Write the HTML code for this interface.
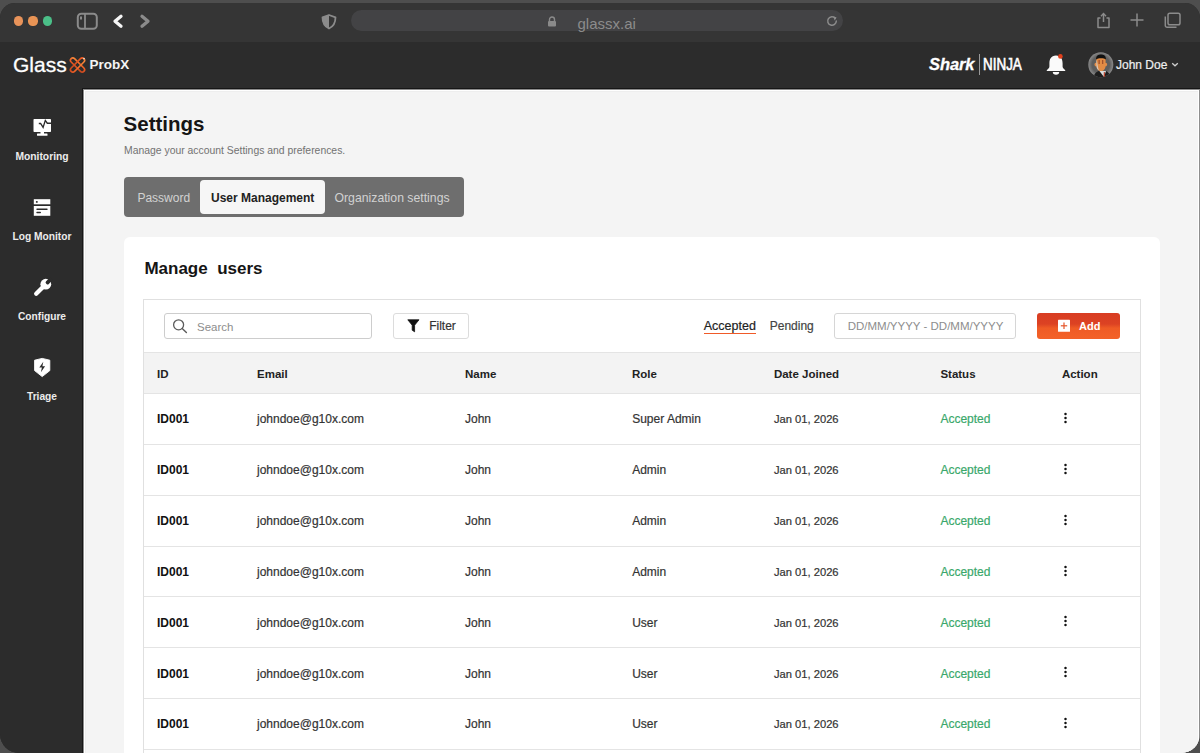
<!DOCTYPE html>
<html><head><meta charset="utf-8">
<style>
*{margin:0;padding:0;box-sizing:border-box}
html,body{width:1200px;height:753px;overflow:hidden;background:#4e4e4e;font-family:"Liberation Sans",sans-serif}
.abs{position:absolute}
svg.abs{overflow:visible}
#win{position:absolute;left:0;top:3px;width:1200px;height:750px;border-radius:15px 15px 19px 19px;overflow:hidden;background:#2c2c2c}
#pg{position:absolute;left:0;top:-3px;width:1200px;height:753px}
.t{position:absolute;white-space:nowrap;line-height:1}
</style></head>
<body>
<div id="win"><div id="pg">
<div class="abs" style="left:0px;top:0px;width:1200px;height:42px;background:#353535"></div>
<div class="abs" style="left:13.9px;top:16.4px;width:9.200000000000001px;height:9.200000000000003px;border-radius:50%;background:#e8935a"></div>
<div class="abs" style="left:28.4px;top:16.4px;width:9.200000000000003px;height:9.200000000000003px;border-radius:50%;background:#e99455"></div>
<div class="abs" style="left:43.0px;top:16.4px;width:9.200000000000003px;height:9.200000000000003px;border-radius:50%;background:#4bbf88"></div>
<svg class="abs" style="left:76px;top:12px" width="23" height="19" viewBox="0 0 23 19"><rect x="1.8" y="1.8" width="19" height="15" rx="3.5" fill="none" stroke="#8b8b8b" stroke-width="2"/><line x1="9" y1="2" x2="9" y2="17" stroke="#8b8b8b" stroke-width="1.8"/><rect x="4" y="4.5" width="2" height="3" fill="#8b8b8b"/></svg>
<svg class="abs" style="left:110px;top:12px" width="16" height="18" viewBox="0 0 16 18"><polyline points="11,4.2 5,9.2 11,14.2" fill="none" stroke="#f6f6f6" stroke-width="3.3" stroke-linecap="round" stroke-linejoin="round"/></svg>
<svg class="abs" style="left:137px;top:12px" width="16" height="18" viewBox="0 0 16 18"><polyline points="5,4.2 11,9.2 5,14.2" fill="none" stroke="#8b8b8b" stroke-width="3.3" stroke-linecap="round" stroke-linejoin="round"/></svg>
<svg class="abs" style="left:321px;top:14px" width="16" height="16" viewBox="0 0 16 16"><path d="M8 1 L14.5 3.3 C14.5 9 12.5 12.5 8 14.5 C3.5 12.5 1.5 9 1.5 3.3 Z" fill="none" stroke="#8b8b8b" stroke-width="1.8" stroke-linejoin="round"/><path d="M8 1 L1.5 3.3 C1.5 9 3.5 12.5 8 14.5 Z" fill="#8b8b8b"/></svg>
<div class="abs" style="left:351px;top:10px;width:492px;height:21px;background:#434345;border-radius:10.5px"></div>
<svg class="abs" style="left:547px;top:16px" width="10" height="11" viewBox="0 0 10 11"><path d="M2.5 5 V3.5 A2.5 2.5 0 0 1 7.5 3.5 V5" fill="none" stroke="#8a8a8a" stroke-width="1.4"/><rect x="1" y="5" width="8" height="5.5" rx="1" fill="#8a8a8a"/></svg>
<div class="t" style="left:577.50px;top:16.00px;font-size:15px;color:#8c8c8c;font-weight:normal;">glassx.ai</div>
<svg class="abs" style="left:826px;top:15px" width="12" height="12" viewBox="0 0 12 12"><path d="M9.3 3.2 A4.3 4.3 0 1 0 10.3 6" fill="none" stroke="#8c8c8c" stroke-width="1.5" stroke-linecap="round"/><path d="M7.2 1.2 L10.6 2.6 L8.6 5.4 Z" fill="#8c8c8c"/></svg>
<svg class="abs" style="left:1096px;top:12px" width="15" height="17" viewBox="0 0 15 17"><path d="M4.5 6 H2 V15.5 H13 V6 H10.5" fill="none" stroke="#8b8b8b" stroke-width="1.5" stroke-linejoin="round"/><line x1="7.5" y1="1.8" x2="7.5" y2="10" stroke="#8b8b8b" stroke-width="1.5"/><polyline points="5,4.2 7.5,1.6 10,4.2" fill="none" stroke="#8b8b8b" stroke-width="1.5"/></svg>
<svg class="abs" style="left:1129px;top:12px" width="16" height="16" viewBox="0 0 16 16"><line x1="8" y1="1.5" x2="8" y2="14.5" stroke="#8b8b8b" stroke-width="1.5"/><line x1="1.5" y1="8" x2="14.5" y2="8" stroke="#8b8b8b" stroke-width="1.5"/></svg>
<svg class="abs" style="left:1164px;top:12px" width="18" height="17" viewBox="0 0 18 17"><rect x="4" y="1.2" width="12" height="11.5" rx="1.8" fill="none" stroke="#8b8b8b" stroke-width="1.5"/><path d="M1.3 4.5 V13.5 A1.8 1.8 0 0 0 3.1 15.3 H12.5" fill="none" stroke="#8b8b8b" stroke-width="1.5"/></svg>
<div class="abs" style="left:0px;top:42px;width:1200px;height:47px;background:#2c2c2c"></div>
<div class="t" style="left:13.00px;top:54.00px;font-size:21px;color:#ffffff;font-weight:normal;letter-spacing:0px;-webkit-text-stroke:0.3px #fff">Glass</div>
<svg class="abs" style="left:68px;top:56px" width="19" height="18" viewBox="0 0 19 18"><defs><linearGradient id="og" x1="1" y1="0" x2="0" y2="1"><stop offset="0" stop-color="#f58a3c"/><stop offset="0.5" stop-color="#ee5a22"/><stop offset="1" stop-color="#c8481f"/></linearGradient></defs><rect x="7.1" y="0" width="4.8" height="18" rx="2.4" transform="rotate(-45 9.5 9)" fill="none" stroke="url(#og)" stroke-width="1.6"/><rect x="7.1" y="0" width="4.8" height="18" rx="2.4" transform="rotate(45 9.5 9)" fill="none" stroke="url(#og)" stroke-width="1.6"/><circle cx="16" cy="2.6" r="0.8" fill="#eee"/></svg>
<div class="t" style="left:89.40px;top:58.00px;font-size:13.5px;color:#f5f5f5;font-weight:bold;">ProbX</div>
<div class="t" style="left:929.00px;top:56.00px;font-size:16.5px;color:#ffffff;font-weight:bold;font-style:italic;letter-spacing:-0.1px;-webkit-text-stroke:0.3px #fff;">Shark</div>
<div class="abs" style="left:979.2px;top:54px;width:1.1999999999999318px;height:21px;background:#9a9a9a"></div>
<div class="t" style="left:982.50px;top:57.00px;font-size:16px;color:#ffffff;font-weight:normal;transform:scaleX(0.84);transform-origin:0 0;-webkit-text-stroke:0.6px #fff;letter-spacing:0px;">NINJA</div>
<svg class="abs" style="left:1045px;top:53px" width="22" height="23" viewBox="0 0 22 23"><path d="M11 2.6 C6 2.6 4.4 6.3 4.4 10.5 V13.6 C4.4 14.9 3.3 16 1.8 17.1 V18 H20.2 V17.1 C18.7 16 17.6 14.9 17.6 13.6 V10.5 C17.6 6.3 16 2.6 11 2.6 Z" fill="#fafafa"/><path d="M7.8 19 A3.2 2.8 0 0 0 14.2 19 Z" fill="#fafafa"/><circle cx="15.4" cy="3.4" r="2.3" fill="#e2401c"/></svg>
<svg class="abs" style="left:1088px;top:52px" width="26" height="26" viewBox="0 0 26 26"><defs><clipPath id="av"><circle cx="12.8" cy="12.7" r="12.5"/></clipPath><radialGradient id="avg" cx="0.5" cy="0.5" r="0.5"><stop offset="0.7" stop-color="#5e5e5e"/><stop offset="1" stop-color="#8a8a8a"/></radialGradient></defs><circle cx="12.8" cy="12.7" r="12.5" fill="url(#avg)"/><g clip-path="url(#av)"><path d="M5 27 C6 21 9 19 12.5 18.5 L18 19 C20.5 20 22 22 22.5 27 Z" fill="#1d1d1d"/><path d="M11 18.5 L16 25 L18 19 Z" fill="#dcdcdc"/><path d="M15.8 20 L16.8 20 L17.3 25.5 L15.6 25.5 Z" fill="#b8412a"/><ellipse cx="7.8" cy="12.6" rx="1.3" ry="1.8" fill="#e48e48"/><ellipse cx="17.8" cy="12.6" rx="1.3" ry="1.8" fill="#e48e48"/><path d="M8.3 7 C8.3 4.5 10.5 3.8 13 3.8 C15.5 3.8 17.6 4.6 17.6 7 V13.5 C17.6 17 15.6 19 13 19 C10.4 19 8.3 17 8.3 13.5 Z" fill="#e28c45"/><path d="M8 7.5 C8 3.5 10.5 2.6 13 2.6 C15.5 2.6 18 3.5 18 7.5 C16 5.8 10 5.8 8 7.5 Z" fill="#111"/><path d="M8.4 7.5 C9.5 10 9.5 15 11 18.5 C9 17.5 8.4 15 8.4 13 Z" fill="#d8d8d8" opacity="0.8"/><rect x="10.5" y="8" width="1.3" height="4" fill="#8a3a22" opacity="0.7"/><rect x="14" y="8" width="1.3" height="4" fill="#8a3a22" opacity="0.7"/></g></svg>
<div class="t" style="left:1116.00px;top:59.00px;font-size:12px;color:#efefef;font-weight:normal;-webkit-text-stroke:0.2px #efefef">John Doe</div>
<svg class="abs" style="left:1171px;top:62px" width="8" height="5" viewBox="0 0 8 5"><polyline points="1.2,1.2 4,3.8 6.8,1.2" fill="none" stroke="#cfcfcf" stroke-width="1.3"/></svg>
<div class="abs" style="left:0px;top:89px;width:84px;height:664px;background:#2c2c2c"></div>
<svg class="abs" style="left:33px;top:118px" width="19" height="19" viewBox="0 0 19 19"><rect x="0.5" y="1" width="17.5" height="13" rx="0.8" fill="#fff"/><rect x="7.5" y="13.5" width="3.5" height="3" fill="#fff"/><rect x="4" y="15.6" width="10.5" height="2.2" rx="0.5" fill="#fff"/><polyline points="5.8,5.5 7.6,5.5 10.1,9.4 12.3,2.4 14.3,5.2 18.5,5.2" fill="none" stroke="#2c2c2c" stroke-width="1.35" stroke-linejoin="miter"/></svg>
<div class="t" style="left:-18.00px;width:120px;text-align:center;top:152.00px;font-size:10.3px;color:#ececec;font-weight:bold;">Monitoring</div>
<svg class="abs" style="left:33px;top:198px" width="19" height="19" viewBox="0 0 19 19"><rect x="0.8" y="1.2" width="16.5" height="5.1" fill="#fff"/><rect x="0.8" y="8" width="16.5" height="9.8" fill="#fff"/><rect x="2.9" y="3" width="1.8" height="1.8" rx="0.6" fill="#2c2c2c"/><rect x="3.3" y="10.5" width="11.4" height="1.5" rx="0.7" fill="#2c2c2c"/><rect x="3.3" y="13.7" width="4.7" height="1.5" rx="0.7" fill="#2c2c2c"/></svg>
<div class="t" style="left:-18.00px;width:120px;text-align:center;top:232.00px;font-size:10.2px;color:#ececec;font-weight:bold;">Log Monitor</div>
<svg class="abs" style="left:32px;top:277px" width="21" height="21" viewBox="0 0 21 21"><line x1="4.2" y1="16.8" x2="11.5" y2="9.5" stroke="#fff" stroke-width="4.3" stroke-linecap="round"/><circle cx="13.8" cy="7.2" r="5.4" fill="#fff"/><rect x="15.1" y="0.3" width="3.8" height="7.5" rx="1.6" transform="rotate(45 17 4)" fill="#2c2c2c"/></svg>
<div class="t" style="left:-18.00px;width:120px;text-align:center;top:312.00px;font-size:10.2px;color:#ececec;font-weight:bold;">Configure</div>
<svg class="abs" style="left:33px;top:357px" width="19" height="21" viewBox="0 0 19 21"><path d="M9.2 1.4 L16.8 3.2 V13.6 L9.2 19.6 L1.6 13.6 V3.2 Z" fill="#fff" stroke="#fff" stroke-width="0.9" stroke-linejoin="round"/><path d="M10.3 4.8 L6.3 10.6 H8.9 L7.9 15.2 L12.1 9.2 H9.4 Z" fill="#2c2c2c"/></svg>
<div class="t" style="left:-18.00px;width:120px;text-align:center;top:392.00px;font-size:10.2px;color:#ececec;font-weight:bold;">Triage</div>
<div class="abs" style="left:82px;top:88px;width:1118px;height:665px;background:#161616"></div>
<div class="abs" style="left:83px;top:89px;width:1117px;height:664px;background:#8c8c8c"></div>
<div class="abs" style="left:84px;top:90px;width:1115px;height:663px;background:#ffffff"></div>
<div class="abs" style="left:85px;top:91px;width:1113px;height:662px;background:#eeeeee"></div>
<div class="abs" style="left:86px;top:92px;width:1112px;height:661px;background:#f4f4f4"></div>
<div class="abs" style="left:1199px;top:89px;width:1px;height:664px;background:#8e8e8e"></div>
<div class="t" style="left:123.60px;top:114.00px;font-size:20.5px;color:#151515;font-weight:bold;">Settings</div>
<div class="t" style="left:124.00px;top:146.00px;font-size:10.4px;color:#727272;font-weight:normal;">Manage your account Settings and preferences.</div>
<div class="abs" style="left:124px;top:177px;width:339.5px;height:39.69999999999999px;background:#6e6e6e;border-radius:4px"></div>
<div class="abs" style="left:200px;top:180px;width:124.5px;height:33.5px;background:#f6f6f6;border-radius:4px"></div>
<div class="t" style="left:137.40px;top:192.00px;font-size:12px;color:#d2d2d2;font-weight:normal;">Password</div>
<div class="t" style="left:211.00px;top:192.00px;font-size:12px;color:#222;font-weight:bold;">User Management</div>
<div class="t" style="left:334.50px;top:192.00px;font-size:12.25px;color:#d2d2d2;font-weight:normal;">Organization settings</div>
<div class="abs" style="left:124px;top:237px;width:1036px;height:523px;background:#ffffff;border-radius:6px"></div>
<div class="t" style="left:144.40px;top:260.00px;font-size:17px;color:#151515;font-weight:bold;">Manage&nbsp; users</div>
<div class="abs" style="left:143px;top:299px;width:998px;height:461px;border:1px solid #e0e0e0;background:#fff"></div>
<div class="abs" style="left:163.5px;top:312.8px;width:208.5px;height:26.399999999999977px;border:1px solid #cdcdcd;border-radius:3px;background:#fff"></div>
<svg class="abs" style="left:172px;top:318px" width="17" height="16" viewBox="0 0 17 16"><circle cx="6.6" cy="6.8" r="5" fill="none" stroke="#5c5c5c" stroke-width="1.3"/><line x1="10.2" y1="10.4" x2="14.4" y2="14.6" stroke="#5c5c5c" stroke-width="1.4" stroke-linecap="round"/></svg>
<div class="t" style="left:197.00px;top:322.00px;font-size:11.5px;color:#8d8d8d;font-weight:normal;">Search</div>
<div class="abs" style="left:392.5px;top:312.8px;width:76.69999999999999px;height:26.0px;border:1px solid #dcdcdc;border-radius:3px;background:#fff"></div>
<svg class="abs" style="left:407px;top:319px" width="13" height="14" viewBox="0 0 13 14"><path d="M0.8 0.8 H12 L7.6 6.2 V12.8 L5.2 11.2 V6.2 Z" fill="#111" stroke="#111" stroke-width="0.8" stroke-linejoin="round"/></svg>
<div class="t" style="left:429.20px;top:320.00px;font-size:12px;color:#333;font-weight:normal;-webkit-text-stroke:0.2px #333">Filter</div>
<div class="t" style="left:703.75px;top:320.00px;font-size:12.5px;color:#222;font-weight:normal;-webkit-text-stroke:0.2px #222">Accepted</div>
<div class="abs" style="left:703.75px;top:332.6px;width:52.25px;height:1.599999999999966px;background:#f05a28"></div>
<div class="t" style="left:769.75px;top:320.00px;font-size:12px;color:#444;font-weight:normal;-webkit-text-stroke:0.2px #444">Pending</div>
<div class="abs" style="left:834.3px;top:313px;width:182.20000000000005px;height:26px;border:1px solid #d6d6d6;border-radius:3px;background:#fff"></div>
<div class="t" style="left:847.70px;top:321.00px;font-size:11.5px;color:#8d8d8d;font-weight:normal;">DD/MM/YYYY - DD/MM/YYYY</div>
<div class="abs" style="left:1037px;top:313px;width:83px;height:26px;background:linear-gradient(#d83d22 0%,#dc4223 42%,#ef5b25 58%,#f36228 100%);border-radius:3px"></div>
<svg class="abs" style="left:1057px;top:319px" width="14" height="14" viewBox="0 0 14 14"><rect x="1" y="0.8" width="12" height="12" rx="0.6" fill="#fff"/><line x1="7" y1="3.6" x2="7" y2="10" stroke="#e5552a" stroke-width="1.2"/><line x1="3.8" y1="6.8" x2="10.2" y2="6.8" stroke="#e5552a" stroke-width="1.2"/></svg>
<div class="t" style="left:1079.00px;top:321.00px;font-size:11px;color:#ffffff;font-weight:bold;">Add</div>
<div class="abs" style="left:144px;top:352px;width:996px;height:42px;background:#f3f3f3;border-top:1px solid #e4e4e4;border-bottom:1px solid #e4e4e4"></div>
<div class="t" style="left:157.00px;top:369.00px;font-size:11.5px;color:#222;font-weight:bold;">ID</div>
<div class="t" style="left:257.00px;top:369.00px;font-size:11.5px;color:#222;font-weight:bold;">Email</div>
<div class="t" style="left:465.00px;top:369.00px;font-size:11.5px;color:#222;font-weight:bold;">Name</div>
<div class="t" style="left:632.00px;top:369.00px;font-size:11.5px;color:#222;font-weight:bold;">Role</div>
<div class="t" style="left:773.90px;top:369.00px;font-size:11.5px;color:#222;font-weight:bold;">Date Joined</div>
<div class="t" style="left:940.40px;top:369.00px;font-size:11.5px;color:#222;font-weight:bold;">Status</div>
<div class="t" style="left:1061.90px;top:369.00px;font-size:11.5px;color:#222;font-weight:bold;">Action</div>
<div class="abs" style="left:144px;top:443.5px;width:996px;height:1.0px;background:#e4e4e4"></div>
<div class="t" style="left:157.00px;top:413.00px;font-size:12px;color:#111;font-weight:bold;">ID001</div>
<div class="t" style="left:257.00px;top:413.00px;font-size:12px;color:#333;font-weight:normal;-webkit-text-stroke:0.2px #333">johndoe@g10x.com</div>
<div class="t" style="left:465.00px;top:413.00px;font-size:12px;color:#333;font-weight:normal;-webkit-text-stroke:0.2px #333">John</div>
<div class="t" style="left:632.20px;top:413.00px;font-size:12px;color:#333;font-weight:normal;-webkit-text-stroke:0.2px #333">Super Admin</div>
<div class="t" style="left:773.90px;top:414.00px;font-size:11.2px;color:#333;font-weight:normal;-webkit-text-stroke:0.2px #333">Jan 01, 2026</div>
<div class="t" style="left:940.40px;top:413.00px;font-size:12px;color:#3aa86b;font-weight:normal;-webkit-text-stroke:0.2px #3aa86b">Accepted</div>
<svg class="abs" style="left:1063px;top:412.0px" width="5" height="14" viewBox="0 0 5 14"><circle cx="2.5" cy="2" r="1.25" fill="#111"/><circle cx="2.5" cy="6" r="1.25" fill="#111"/><circle cx="2.5" cy="10" r="1.25" fill="#111"/></svg>
<div class="abs" style="left:144px;top:494.5px;width:996px;height:1.0px;background:#e4e4e4"></div>
<div class="t" style="left:157.00px;top:464.00px;font-size:12px;color:#111;font-weight:bold;">ID001</div>
<div class="t" style="left:257.00px;top:464.00px;font-size:12px;color:#333;font-weight:normal;-webkit-text-stroke:0.2px #333">johndoe@g10x.com</div>
<div class="t" style="left:465.00px;top:464.00px;font-size:12px;color:#333;font-weight:normal;-webkit-text-stroke:0.2px #333">John</div>
<div class="t" style="left:632.20px;top:464.00px;font-size:12px;color:#333;font-weight:normal;-webkit-text-stroke:0.2px #333">Admin</div>
<div class="t" style="left:773.90px;top:465.00px;font-size:11.2px;color:#333;font-weight:normal;-webkit-text-stroke:0.2px #333">Jan 01, 2026</div>
<div class="t" style="left:940.40px;top:464.00px;font-size:12px;color:#3aa86b;font-weight:normal;-webkit-text-stroke:0.2px #3aa86b">Accepted</div>
<svg class="abs" style="left:1063px;top:462.85px" width="5" height="14" viewBox="0 0 5 14"><circle cx="2.5" cy="2" r="1.25" fill="#111"/><circle cx="2.5" cy="6" r="1.25" fill="#111"/><circle cx="2.5" cy="10" r="1.25" fill="#111"/></svg>
<div class="abs" style="left:144px;top:545.5px;width:996px;height:1.0px;background:#e4e4e4"></div>
<div class="t" style="left:157.00px;top:515.00px;font-size:12px;color:#111;font-weight:bold;">ID001</div>
<div class="t" style="left:257.00px;top:515.00px;font-size:12px;color:#333;font-weight:normal;-webkit-text-stroke:0.2px #333">johndoe@g10x.com</div>
<div class="t" style="left:465.00px;top:515.00px;font-size:12px;color:#333;font-weight:normal;-webkit-text-stroke:0.2px #333">John</div>
<div class="t" style="left:632.20px;top:515.00px;font-size:12px;color:#333;font-weight:normal;-webkit-text-stroke:0.2px #333">Admin</div>
<div class="t" style="left:773.90px;top:516.00px;font-size:11.2px;color:#333;font-weight:normal;-webkit-text-stroke:0.2px #333">Jan 01, 2026</div>
<div class="t" style="left:940.40px;top:515.00px;font-size:12px;color:#3aa86b;font-weight:normal;-webkit-text-stroke:0.2px #3aa86b">Accepted</div>
<svg class="abs" style="left:1063px;top:513.7px" width="5" height="14" viewBox="0 0 5 14"><circle cx="2.5" cy="2" r="1.25" fill="#111"/><circle cx="2.5" cy="6" r="1.25" fill="#111"/><circle cx="2.5" cy="10" r="1.25" fill="#111"/></svg>
<div class="abs" style="left:144px;top:595.5px;width:996px;height:1.0px;background:#e4e4e4"></div>
<div class="t" style="left:157.00px;top:566.00px;font-size:12px;color:#111;font-weight:bold;">ID001</div>
<div class="t" style="left:257.00px;top:566.00px;font-size:12px;color:#333;font-weight:normal;-webkit-text-stroke:0.2px #333">johndoe@g10x.com</div>
<div class="t" style="left:465.00px;top:566.00px;font-size:12px;color:#333;font-weight:normal;-webkit-text-stroke:0.2px #333">John</div>
<div class="t" style="left:632.20px;top:566.00px;font-size:12px;color:#333;font-weight:normal;-webkit-text-stroke:0.2px #333">Admin</div>
<div class="t" style="left:773.90px;top:567.00px;font-size:11.2px;color:#333;font-weight:normal;-webkit-text-stroke:0.2px #333">Jan 01, 2026</div>
<div class="t" style="left:940.40px;top:566.00px;font-size:12px;color:#3aa86b;font-weight:normal;-webkit-text-stroke:0.2px #3aa86b">Accepted</div>
<svg class="abs" style="left:1063px;top:564.55px" width="5" height="14" viewBox="0 0 5 14"><circle cx="2.5" cy="2" r="1.25" fill="#111"/><circle cx="2.5" cy="6" r="1.25" fill="#111"/><circle cx="2.5" cy="10" r="1.25" fill="#111"/></svg>
<div class="abs" style="left:144px;top:646.5px;width:996px;height:1.0px;background:#e4e4e4"></div>
<div class="t" style="left:157.00px;top:617.00px;font-size:12px;color:#111;font-weight:bold;">ID001</div>
<div class="t" style="left:257.00px;top:617.00px;font-size:12px;color:#333;font-weight:normal;-webkit-text-stroke:0.2px #333">johndoe@g10x.com</div>
<div class="t" style="left:465.00px;top:617.00px;font-size:12px;color:#333;font-weight:normal;-webkit-text-stroke:0.2px #333">John</div>
<div class="t" style="left:632.20px;top:617.00px;font-size:12px;color:#333;font-weight:normal;-webkit-text-stroke:0.2px #333">User</div>
<div class="t" style="left:773.90px;top:618.00px;font-size:11.2px;color:#333;font-weight:normal;-webkit-text-stroke:0.2px #333">Jan 01, 2026</div>
<div class="t" style="left:940.40px;top:617.00px;font-size:12px;color:#3aa86b;font-weight:normal;-webkit-text-stroke:0.2px #3aa86b">Accepted</div>
<svg class="abs" style="left:1063px;top:615.4px" width="5" height="14" viewBox="0 0 5 14"><circle cx="2.5" cy="2" r="1.25" fill="#111"/><circle cx="2.5" cy="6" r="1.25" fill="#111"/><circle cx="2.5" cy="10" r="1.25" fill="#111"/></svg>
<div class="abs" style="left:144px;top:697.5px;width:996px;height:1.0px;background:#e4e4e4"></div>
<div class="t" style="left:157.00px;top:668.00px;font-size:12px;color:#111;font-weight:bold;">ID001</div>
<div class="t" style="left:257.00px;top:668.00px;font-size:12px;color:#333;font-weight:normal;-webkit-text-stroke:0.2px #333">johndoe@g10x.com</div>
<div class="t" style="left:465.00px;top:668.00px;font-size:12px;color:#333;font-weight:normal;-webkit-text-stroke:0.2px #333">John</div>
<div class="t" style="left:632.20px;top:668.00px;font-size:12px;color:#333;font-weight:normal;-webkit-text-stroke:0.2px #333">User</div>
<div class="t" style="left:773.90px;top:669.00px;font-size:11.2px;color:#333;font-weight:normal;-webkit-text-stroke:0.2px #333">Jan 01, 2026</div>
<div class="t" style="left:940.40px;top:668.00px;font-size:12px;color:#3aa86b;font-weight:normal;-webkit-text-stroke:0.2px #3aa86b">Accepted</div>
<svg class="abs" style="left:1063px;top:666.25px" width="5" height="14" viewBox="0 0 5 14"><circle cx="2.5" cy="2" r="1.25" fill="#111"/><circle cx="2.5" cy="6" r="1.25" fill="#111"/><circle cx="2.5" cy="10" r="1.25" fill="#111"/></svg>
<div class="abs" style="left:144px;top:748.5px;width:996px;height:1.0px;background:#e4e4e4"></div>
<div class="t" style="left:157.00px;top:718.00px;font-size:12px;color:#111;font-weight:bold;">ID001</div>
<div class="t" style="left:257.00px;top:718.00px;font-size:12px;color:#333;font-weight:normal;-webkit-text-stroke:0.2px #333">johndoe@g10x.com</div>
<div class="t" style="left:465.00px;top:718.00px;font-size:12px;color:#333;font-weight:normal;-webkit-text-stroke:0.2px #333">John</div>
<div class="t" style="left:632.20px;top:718.00px;font-size:12px;color:#333;font-weight:normal;-webkit-text-stroke:0.2px #333">User</div>
<div class="t" style="left:773.90px;top:719.00px;font-size:11.2px;color:#333;font-weight:normal;-webkit-text-stroke:0.2px #333">Jan 01, 2026</div>
<div class="t" style="left:940.40px;top:718.00px;font-size:12px;color:#3aa86b;font-weight:normal;-webkit-text-stroke:0.2px #3aa86b">Accepted</div>
<svg class="abs" style="left:1063px;top:717.1px" width="5" height="14" viewBox="0 0 5 14"><circle cx="2.5" cy="2" r="1.25" fill="#111"/><circle cx="2.5" cy="6" r="1.25" fill="#111"/><circle cx="2.5" cy="10" r="1.25" fill="#111"/></svg>
<div class="abs" style="left:144px;top:799.5px;width:996px;height:1.0px;background:#e4e4e4"></div>
</div></div>
</body></html>
